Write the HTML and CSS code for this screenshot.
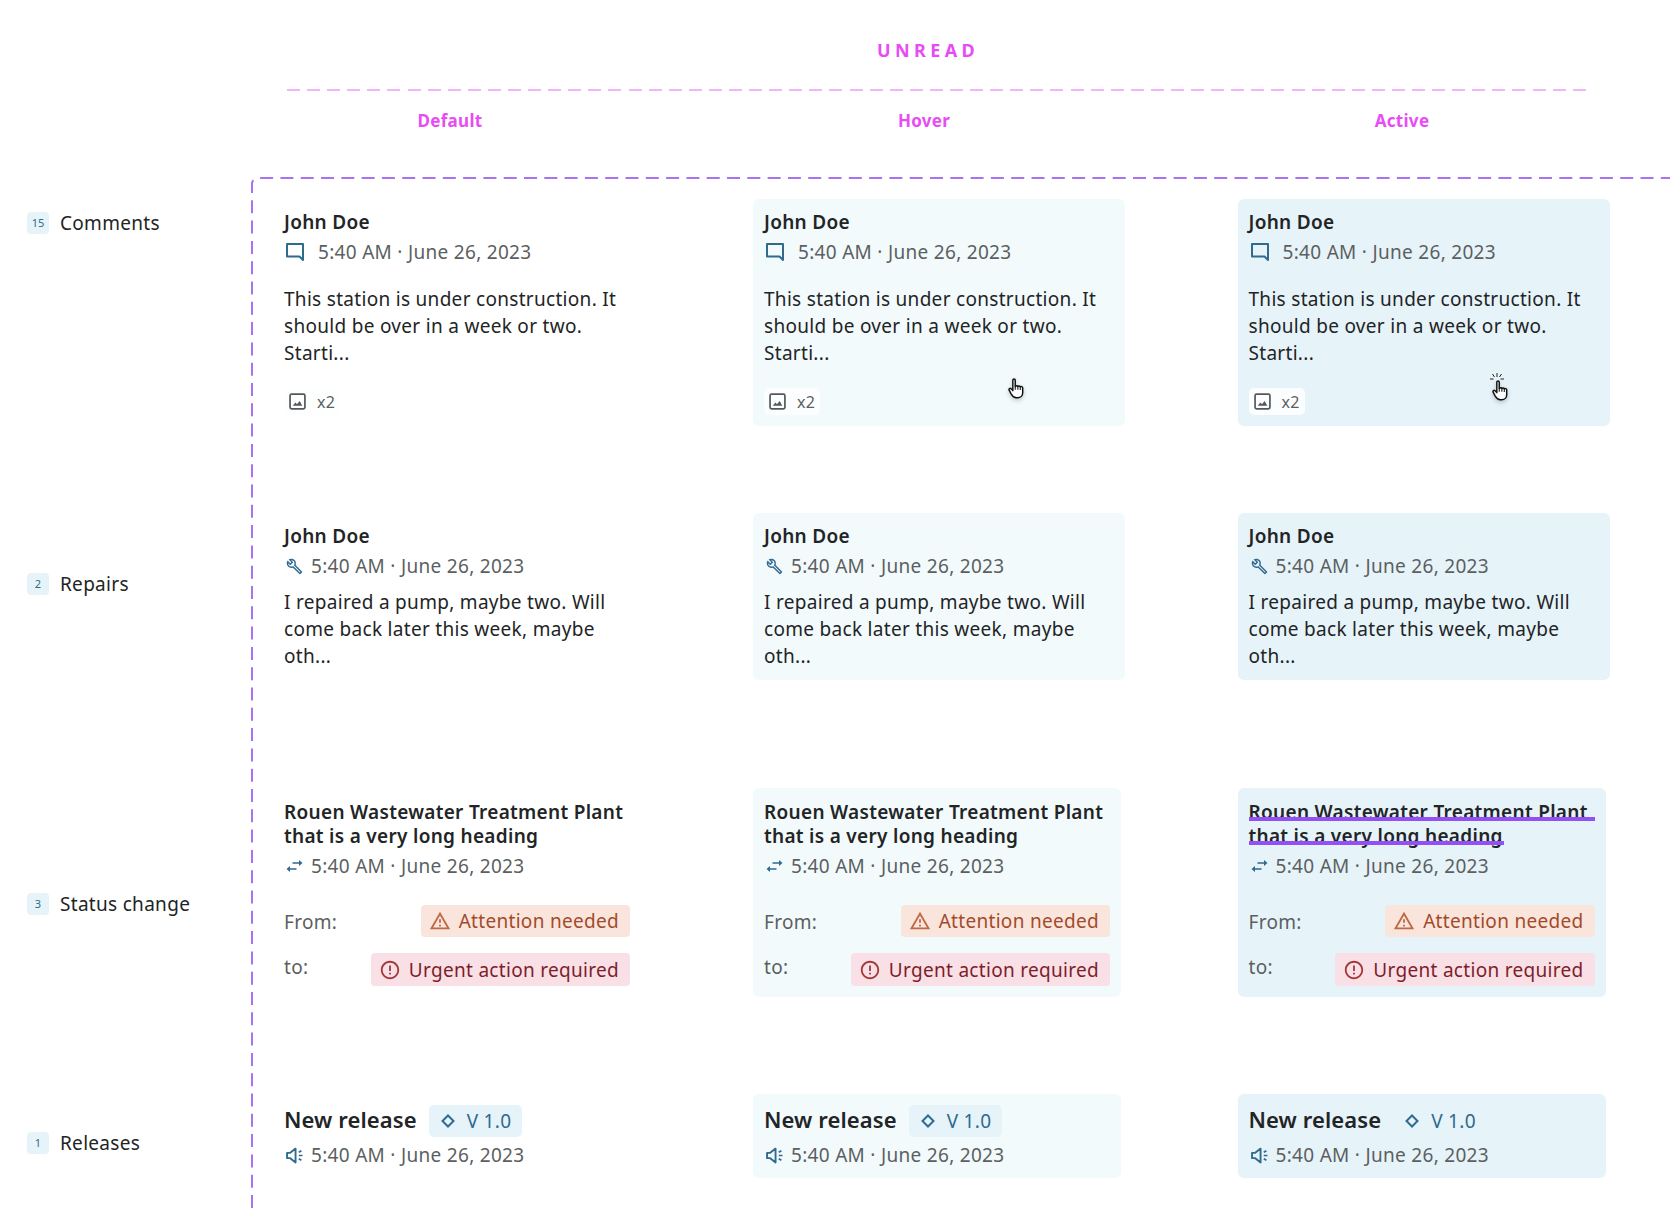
FILE: index.html
```html
<!DOCTYPE html>
<html lang="en">
<head>
<meta charset="utf-8">
<title>Unread notification states</title>
<link rel="stylesheet" href="styles.css">
</head>
<body>
<svg class="defs" aria-hidden="true">
  <symbol id="i-comment" viewBox="0 0 18 18"><path d="M1 1h16v16l-3.5-3.500H1z" fill="none" stroke="currentColor" stroke-width="2" stroke-linejoin="round"/></symbol>
  <symbol id="i-image" viewBox="0 0 16 16"><rect x="1" y="1" width="14" height="14" rx="1.500" fill="none" stroke="currentColor" stroke-width="1.600"/><path d="M3.500 12l2.500-3 1.500 1.500L10 7.500l2.500 4.500z" fill="currentColor"/></symbol>
  <symbol id="i-wrench" viewBox="0 0 24 24"><path fill="currentColor" d="M22.610 18.990l-9.080-9.080c.93-2.340.45-5.100-1.440-7C9.790.61 6.210.4 3.660 2.260L7.500 6.110 6.080 7.520 2.250 3.690C.39 6.230.6 9.820 2.900 12.110c1.860 1.860 4.570 2.350 6.890 1.480l9.110 9.110c.39.39 1.020.39 1.410 0l2.300-2.300c.4-.38.4-1.010 0-1.410zm-3 1.600l-9.460-9.460c-.61.45-1.290.72-2 .82-1.360.2-2.790-.21-3.830-1.250C3.370 9.760 2.930 8.500 3 7.260l3.090 3.090 4.240-4.240-3.090-3.090c1.240-.07 2.490.37 3.440 1.310 1.080 1.080 1.490 2.570 1.240 3.960-.12.71-.42 1.370-.88 1.960l9.450 9.450-.88.880z"/></symbol>
  <symbol id="i-swap" viewBox="0 0 16 12"><path fill="currentColor" d="M6 2.200h6.500V0L16 3l-3.500 3V3.800H6zM10 8.200H3.500V6L0 9l3.500 3V9.800H10z"/></symbol>
  <symbol id="i-speaker" viewBox="0 0 16 15"><path d="M1 5v5h3l5 4V1L4 5z" fill="none" stroke="currentColor" stroke-width="1.800" stroke-linejoin="round"/><path d="M12 4.500l2.500-1.500M12 7.500h3.500M12 10.500l2.500 1.500" fill="none" stroke="currentColor" stroke-width="1.600"/></symbol>
  <symbol id="i-warning" viewBox="0 0 24 24"><path fill="currentColor" d="M12 5.990L19.530 19H4.470L12 5.990M12 2L1 21h22L12 2zm1 14h-2v2h2v-2zm0-6h-2v4h2v-4z"/></symbol>
  <symbol id="i-error" viewBox="0 0 24 24"><path fill="currentColor" d="M11 15h2v2h-2zm0-8h2v6h-2zm.99-5C6.470 2 2 6.480 2 12s4.470 10 9.990 10C17.520 22 22 17.520 22 12S17.520 2 11.990 2zM12 20c-4.420 0-8-3.580-8-8s3.580-8 8-8 8 3.580 8 8-3.580 8-8 8z"/></symbol>
  <symbol id="i-diamond" viewBox="0 0 14 14"><path d="M7 1.500L12.500 7 7 12.500 1.500 7z" fill="none" stroke="currentColor" stroke-width="2"/></symbol>
  <symbol id="i-hand" viewBox="0 0 16 20"><path d="M4.500 2.200c0-1.600 2.300-1.600 2.300 0v6c.6-1 2.200-1 2.500 0 .5-1 2.100-.8 2.300.2.600-.6 2.300-.2 2.300 1V14c0 2.800-2 4.800-4.800 4.800H7.800c-2.100 0-3.600-1.500-4.800-3.500L1 11.500c-.6-1.200.8-2.200 1.800-1.300l1.700 1.800z" fill="#fff" stroke="#111" stroke-width="1.400" stroke-linejoin="round"/><path d="M6.800 8.200v3M9.300 8.200v3M11.600 8.400v3" stroke="#111" stroke-width="1" fill="none"/></symbol>
</svg>

<main class="page">
  <h1 class="title">UNREAD</h1>
  <div class="title-rule"></div>
  <div class="states">
    <span>Default</span>
    <span>Hover</span>
    <span>Active</span>
  </div>

  <section class="board">
    <svg class="frame" width="1420" height="1032" aria-hidden="true"><path d="M1 1031V7a6 6 0 0 1 6-6H1420"/></svg>

    <div class="row">
      <div class="label label-comments"><span class="count">15</span>Comments</div>
      <article class="card">
        <h2 class="name">John Doe</h2>
        <div class="meta meta-wide"><svg class="ico ico-18"><use href="#i-comment"/></svg>5:40 AM · June 26, 2023</div>
        <p class="body body-loose">This station is under construction. It should be over in a week or two. Starti...</p>
        <span class="attach attach-default"><svg class="ico-image"><use href="#i-image"/></svg>x2</span>
      </article>
      <article class="card card-hover">
        <h2 class="name">John Doe</h2>
        <div class="meta meta-wide"><svg class="ico ico-18"><use href="#i-comment"/></svg>5:40 AM · June 26, 2023</div>
        <p class="body body-loose">This station is under construction. It should be over in a week or two. Starti...</p>
        <span class="attach"><svg class="ico-image"><use href="#i-image"/></svg>x2</span>
        <svg class="cursor"><use href="#i-hand"/></svg>
      </article>
      <article class="card card-active">
        <h2 class="name">John Doe</h2>
        <div class="meta meta-wide"><svg class="ico ico-18"><use href="#i-comment"/></svg>5:40 AM · June 26, 2023</div>
        <p class="body body-loose">This station is under construction. It should be over in a week or two. Starti...</p>
        <span class="attach"><svg class="ico-image"><use href="#i-image"/></svg>x2</span>
        <svg class="sparks" viewBox="0 0 14 10"><path d="M7 0v4M2.500 1l2 3M11.500 1l-2 3M0 6h3.500M10.500 6h3.500" stroke="#222" stroke-width="1" fill="none"/></svg>
        <svg class="cursor cursor-press"><use href="#i-hand"/></svg>
      </article>
    </div>

    <div class="row row-repairs">
      <div class="label label-repairs"><span class="count">2</span>Repairs</div>
      <article class="card">
        <h2 class="name">John Doe</h2>
        <div class="meta"><svg class="ico"><use href="#i-wrench"/></svg>5:40 AM · June 26, 2023</div>
        <p class="body">I repaired a pump, maybe two. Will come back later this week, maybe oth...</p>
      </article>
      <article class="card card-hover">
        <h2 class="name">John Doe</h2>
        <div class="meta"><svg class="ico"><use href="#i-wrench"/></svg>5:40 AM · June 26, 2023</div>
        <p class="body">I repaired a pump, maybe two. Will come back later this week, maybe oth...</p>
      </article>
      <article class="card card-active">
        <h2 class="name">John Doe</h2>
        <div class="meta"><svg class="ico"><use href="#i-wrench"/></svg>5:40 AM · June 26, 2023</div>
        <p class="body">I repaired a pump, maybe two. Will come back later this week, maybe oth...</p>
      </article>
    </div>

    <div class="row row-status">
      <div class="label label-status"><span class="count">3</span>Status change</div>
      <article class="card card-narrow card-status">
        <h2 class="heading">Rouen Wastewater Treatment Plant that is a very long heading</h2>
        <div class="meta"><svg class="ico ico-swap"><use href="#i-swap"/></svg>5:40 AM · June 26, 2023</div>
        <div class="change change-from"><span>From:</span><span class="chip chip-attention"><svg class="chip-ico"><use href="#i-warning"/></svg>Attention needed</span></div>
        <div class="change change-to"><span>to:</span><span class="chip chip-urgent"><svg class="chip-ico"><use href="#i-error"/></svg>Urgent action required</span></div>
      </article>
      <article class="card card-narrow card-status card-hover">
        <h2 class="heading">Rouen Wastewater Treatment Plant that is a very long heading</h2>
        <div class="meta"><svg class="ico ico-swap"><use href="#i-swap"/></svg>5:40 AM · June 26, 2023</div>
        <div class="change change-from"><span>From:</span><span class="chip chip-attention"><svg class="chip-ico"><use href="#i-warning"/></svg>Attention needed</span></div>
        <div class="change change-to"><span>to:</span><span class="chip chip-urgent"><svg class="chip-ico"><use href="#i-error"/></svg>Urgent action required</span></div>
      </article>
      <article class="card card-narrow card-status card-active">
        <h2 class="heading">Rouen Wastewater Treatment Plant that is a very long heading</h2>
        <span class="strike strike-first"></span>
        <span class="strike strike-second"></span>
        <div class="meta"><svg class="ico ico-swap"><use href="#i-swap"/></svg>5:40 AM · June 26, 2023</div>
        <div class="change change-from"><span>From:</span><span class="chip chip-attention"><svg class="chip-ico"><use href="#i-warning"/></svg>Attention needed</span></div>
        <div class="change change-to"><span>to:</span><span class="chip chip-urgent"><svg class="chip-ico"><use href="#i-error"/></svg>Urgent action required</span></div>
      </article>
    </div>

    <div class="row row-releases">
      <div class="label label-releases"><span class="count">1</span>Releases</div>
      <article class="card card-narrow card-release">
        <div class="release-head"><h2 class="release-name">New release</h2><span class="version"><svg class="version-ico"><use href="#i-diamond"/></svg>V 1.0</span></div>
        <div class="meta"><svg class="ico"><use href="#i-speaker"/></svg>5:40 AM · June 26, 2023</div>
      </article>
      <article class="card card-narrow card-release card-hover">
        <div class="release-head"><h2 class="release-name">New release</h2><span class="version"><svg class="version-ico"><use href="#i-diamond"/></svg>V 1.0</span></div>
        <div class="meta"><svg class="ico"><use href="#i-speaker"/></svg>5:40 AM · June 26, 2023</div>
      </article>
      <article class="card card-narrow card-release card-active">
        <div class="release-head"><h2 class="release-name">New release</h2><span class="version"><svg class="version-ico"><use href="#i-diamond"/></svg>V 1.0</span></div>
        <div class="meta"><svg class="ico"><use href="#i-speaker"/></svg>5:40 AM · June 26, 2023</div>
      </article>
    </div>
  </section>
</main>
</body>
</html>
```

FILE: styles.css
```css
* { box-sizing: border-box; }
html, body { margin: 0; padding: 0; background: #fff; }
body {
  width: 1670px;
  height: 1208px;
  overflow: hidden;
  font-family: "Noto Sans", "Open Sans", sans-serif;
  font-size: 19px;
  letter-spacing: .3px;
  color: #222426;
}
.defs { display: none; }
.page { padding-top: 38px; }

.title {
  margin: 0;
  padding-left: 186px;
  text-align: center;
  font-size: 18px;
  line-height: 24px;
  font-weight: 700;
  letter-spacing: 4.4px;
  color: #e84cf5;
}
.title-rule {
  margin: 27px 0 0 287px;
  width: 1299px;
  height: 2px;
  background: repeating-linear-gradient(90deg, #f3b5fa 0 13px, transparent 13px 20.090px);
}
.states {
  display: grid;
  grid-template-columns: 480px 468px 488px;
  margin-top: 20px;
  padding-left: 210px;
  height: 20px;
  text-align: center;
  font-size: 17px;
  line-height: 20px;
  font-weight: 700;
  color: #e84cf5;
}

.board {
  position: relative;
  margin-top: 47px;
  padding-top: 21px;
  height: 1030px;
}
.frame {
  position: absolute;
  left: 251px;
  top: -1px;
  fill: none;
  stroke: #a872f5;
  stroke-width: 2;
  stroke-dasharray: 13 7.300;
}

.row {
  display: grid;
  grid-template-columns: 273px 480px 484.500px 432.500px;
  align-items: start;
}
.row-repairs { margin-top: 87px; }
.row-status { margin-top: 108px; }
.row-releases { margin-top: 97px; }

.label {
  display: flex;
  align-items: center;
  gap: 11px;
  padding-left: 27px;
  font-size: 19px;
  line-height: 22px;
}
.label-comments { margin-top: 13px; }
.label-repairs { margin-top: 60px; }
.label-status { margin-top: 105px; }
.label-releases { margin-top: 38px; }
.count {
  display: flex;
  align-items: center;
  justify-content: center;
  width: 22px;
  height: 22px;
  border-radius: 4px;
  background: #e6f3f9;
  color: #2f6a8f;
  font-size: 11px;
  letter-spacing: 0;
}

.card {
  position: relative;
  width: 372px;
  padding: 8px 11px 10px;
  border-radius: 6px;
}
.card-hover { background: #f2fafc; }
.card-active { background: #e6f3f9; }
.card-narrow { width: 368px; }
.card-status { padding-top: 12px; padding-bottom: 11px; }
.card-release { padding-top: 11px; padding-bottom: 8px; }

.name {
  margin: 0;
  font-size: 19px;
  line-height: 30px;
  font-weight: 600;
}
.heading {
  margin: 0;
  font-size: 19px;
  line-height: 24px;
  font-weight: 600;
}
.strike {
  position: absolute;
  left: 11px;
  height: 4px;
  background: #9350f5;
}
.strike-first { top: 29px; width: 346px; }
.strike-second { top: 53px; width: 255px; }
.meta {
  display: flex;
  align-items: center;
  gap: 8px;
  height: 30px;
  color: #5c5f61;
  font-size: 19px;
}
.card-status .meta { margin-top: 3px; }
.card-release .meta { margin-top: 3px; }
.meta-wide { gap: 14px; padding-left: 2px; }
.ico {
  flex: none;
  width: 17px;
  height: 17px;
  margin-left: 2px;
  color: #2f6a8f;
}
.ico-18 { width: 18px; height: 18px; margin-left: 0; }
.ico-swap { height: 12px; }

.body {
  margin: 8px 0 0;
  font-size: 19px;
  line-height: 27px;
}
.body-loose { margin-top: 19px; }

.attach {
  display: flex;
  align-items: center;
  gap: 11px;
  width: 56px;
  height: 27px;
  margin-top: 21px;
  margin-bottom: 1px;
  padding-left: 5px;
  border-radius: 5px;
  background: #fbfdfe;
  color: #5c5f61;
  font-size: 16px;
  letter-spacing: .3px;
}
.attach-default { background: #fdfefe; }
.ico-image { flex: none; width: 17px; height: 17px; color: #54585a; }

.cursor {
  position: absolute;
  left: 255px;
  top: 179px;
  width: 17px;
  height: 21px;
  filter: drop-shadow(0 2px 2px rgba(0, 0, 0, .2));
}
.cursor-press { left: 254px; top: 181px; }
.sparks {
  position: absolute;
  left: 252px;
  top: 174px;
  width: 14px;
  height: 10px;
}

.change {
  display: flex;
  justify-content: space-between;
  color: #5c5f61;
}
.change-from { margin-top: 24px; align-items: center; }
.change-to { margin-top: 16px; }
.change-from > span:first-child { padding-top: 2px; }
.change-to > span:first-child { line-height: 28px; }
.chip {
  display: flex;
  align-items: center;
  gap: 10px;
  height: 32px;
  padding: 0 11px 0 10px;
  border-radius: 4px;
}
.chip-attention { background: #fae5dc; color: #a34a2b; }
.chip-urgent { background: #f9e0e6; color: #7e1d2a; height: 33px; }
.chip-attention .chip-ico { color: #bd6a47; }
.chip-urgent .chip-ico { color: #a33a3a; }
.chip-ico { flex: none; width: 22px; height: 22px; margin-left: -2px; margin-right: -2px; }

.release-head { display: flex; align-items: center; gap: 12px; height: 32px; }
.release-name { margin: -5px 0 0; font-size: 22px; line-height: 30px; font-weight: 600; letter-spacing: .1px; }
.version {
  display: flex;
  align-items: center;
  gap: 12px;
  height: 32px;
  padding: 0 11px 0 12px;
  border-radius: 5px;
  background: #e6f3f9;
  color: #2f6a8f;
  font-size: 19px;
}
.version-ico { flex: none; width: 14px; height: 14px; }
```
